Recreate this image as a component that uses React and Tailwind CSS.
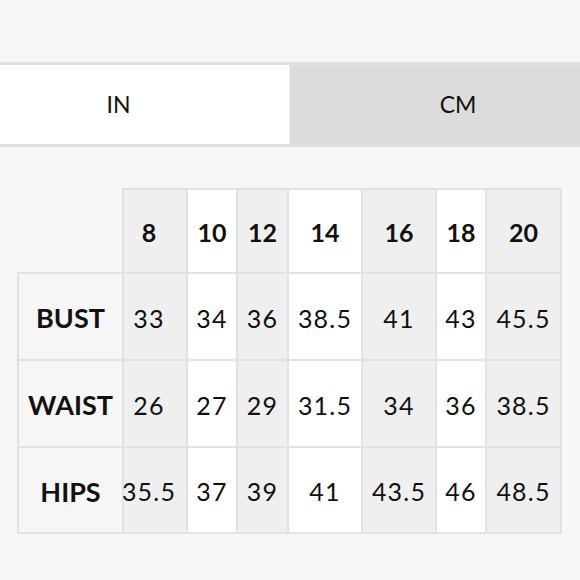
import React from "react";

const sizes = ["8", "10", "12", "14", "16", "18", "20"];
const shaded = [true, false, true, false, true, false, true];
const rows = [
  ["BUST", ["33", "34", "36", "38.5", "41", "43", "45.5"]],
  ["WAIST", ["26", "27", "29", "31.5", "34", "36", "38.5"]],
  ["HIPS", ["35.5", "37", "39", "41", "43.5", "46", "48.5"]],
];

export default function App() {
  return (
    <div
      className="w-[580px] h-[580px] bg-[#f7f7f7] text-[#111] overflow-hidden pt-[62px]"
      style={{ fontFamily: "Lato, 'Open Sans', sans-serif" }}
    >
      <div className="flex h-[85px] border-y-[3px] border-[#e0e0e0]">
        <div className="w-[290px] bg-white flex items-center justify-center pr-[52px] text-[23px] border-r border-[#eaeaea]">
          IN
        </div>
        <div className="flex-1 bg-[#dcdcdc] flex items-center justify-center pl-[46px] text-[23px]">
          CM
        </div>
      </div>

      <div className="mt-[41px] ml-[17px] grid grid-cols-[107px_64px_50px_51px_74px_74px_50px_75px] grid-rows-[86px_87px_87px_86px] w-[545px]">
        <div className="border-r-2 border-b-2 border-[#e2e2e2]" />
        {sizes.map((s, i) => (
          <div
            key={s}
            className={
              "border-t-2 border-r-2 border-b-2 border-[#e2e2e2] flex items-center justify-center pt-[4px] text-[25px] font-bold " +
              (shaded[i] ? "bg-[#efefef] " : "bg-white ") +
              (i === 0 ? "pr-[12px]" : "")
            }
          >
            {s}
          </div>
        ))}
        {rows.map(([label, vals]) => (
          <React.Fragment key={label}>
            <div className="border-l-2 border-r-2 border-b-2 border-[#e2e2e2] bg-[#f6f6f6] flex items-center justify-center pt-[4px] text-[27px] font-bold">
              {label}
            </div>
            {vals.map((v, i) => (
              <div
                key={i}
                className={
                  "border-r-2 border-b-2 border-[#e2e2e2] flex items-center justify-center pt-[4px] text-[25px] tracking-[1.2px] " +
                  (shaded[i] ? "bg-[#efefef] " : "bg-white ") +
                  (i === 0 ? "pr-[12px]" : "")
                }
              >
                {v}
              </div>
            ))}
          </React.Fragment>
        ))}
      </div>
    </div>
  );
}
